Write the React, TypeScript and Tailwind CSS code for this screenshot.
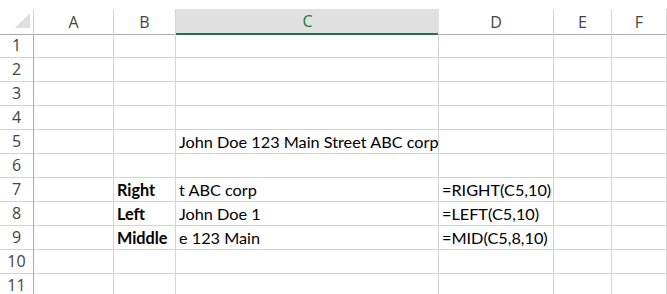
import React from "react";

const cols = ["A", "B", "C", "D", "E", "F"];
const rowCount = 11;

// cell contents keyed by "row:col"
const cells: Record<string, { text: string; bold?: boolean }> = {
  "5:C": { text: "John Doe 123 Main Street ABC corp" },
  "7:B": { text: "Right", bold: true },
  "7:C": { text: "t ABC corp" },
  "7:D": { text: "=RIGHT(C5,10)" },
  "8:B": { text: "Left", bold: true },
  "8:C": { text: "John Doe 1" },
  "8:D": { text: "=LEFT(C5,10)" },
  "9:B": { text: "Middle", bold: true },
  "9:C": { text: "e 123 Main" },
  "9:D": { text: "=MID(C5,8,10)" },
};

const gridCols = "grid grid-cols-[34px_80px_62px_263px_115px_58px_55px]";

export default function App() {
  return (
    <div className="w-[667px] h-[294px] overflow-hidden bg-white pt-[9px] font-['Lato',sans-serif]">
      {/* column headers */}
      <div className={`${gridCols} h-[24px]`}>
        <div className="relative border-r border-b border-[#d4d4d4] border-b-[#ababab]">
          <svg className="absolute left-[15px] top-[4px]" width="16" height="16" viewBox="0 0 16 16">
            <polygon points="15,0 15,15 0,15" fill="#dfdfdf" />
          </svg>
        </div>
        {cols.map((c) =>
          c === "C" ? (
            <div
              key={c}
              className="flex items-center justify-center bg-[#e1e1e1] border-b-2 border-[#217346] text-[16px] text-[#217346] font-['Open_Sans',sans-serif]"
            >
              {c}
            </div>
          ) : (
            <div
              key={c}
              className="flex items-center justify-center border-r border-b border-[#d4d4d4] border-b-[#ababab] text-[16px] text-[#444] font-['Open_Sans',sans-serif]"
            >
              {c}
            </div>
          )
        )}
      </div>

      {/* rows */}
      {Array.from({ length: rowCount }, (_, i) => i + 1).map((r) => (
        <div key={r} className={`${gridCols} h-[24px]`}>
          <div className="flex items-center justify-center border-r border-b border-[#d4d4d4] border-r-[#ababab] text-[16px] text-[#444] font-['Open_Sans',sans-serif]">
            {r}
          </div>
          {cols.map((c) => {
            const cell = cells[`${r}:${c}`];
            return (
              <div
                key={c}
                className="flex items-end pl-[3px] pb-[1px] border-r border-b border-[#d4d4d4] text-[16.25px] leading-[21px] text-black whitespace-nowrap overflow-visible"
              >
                {cell && <span className={cell.bold ? "font-bold" : ""}>{cell.text}</span>}
              </div>
            );
          })}
        </div>
      ))}
    </div>
  );
}
